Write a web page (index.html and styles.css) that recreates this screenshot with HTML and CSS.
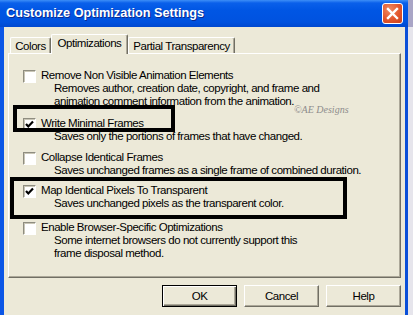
FILE: index.html
```html
<!DOCTYPE html>
<html>
<head>
<meta charset="utf-8">
<link rel="stylesheet" href="styles.css">
</head>
<body>
<div class="window">
  <div class="titlebar">
    <span class="title">Customize Optimization Settings</span>
    <div class="close"><svg width="21" height="21" viewBox="0 0 21 21"><path d="M6 6 L15 15 M15 6 L6 15" stroke="#fff" stroke-width="2.4" stroke-linecap="square"/></svg></div>
  </div>
  <div class="client">
    <div class="tabs">
      <div class="tab t-colors">Colors</div>
      <div class="tab t-opt active">Optimizations</div>
      <div class="tab t-partial">Partial Transparency</div>
    </div>
    <div class="panel">
      <div class="option">
        <span class="check"></span>
        <div class="texts">
          <div class="label">Remove Non Visible Animation Elements</div>
          <div class="desc">Removes author, creation date, copyright, and frame and<br>animation comment information from the animation.</div>
        </div>
      </div>
      <div class="option o2">
        <span class="check checked"><svg width="11" height="11" viewBox="0 0 11 11"><path d="M2 5 L4.3 7.5 L9 2.5" fill="none" stroke="#000" stroke-width="2.2"/></svg></span>
        <div class="texts">
          <div class="label">Write Minimal Frames</div>
          <div class="desc">Saves only the portions of frames that have changed.</div>
        </div>
      </div>
      <div class="option o3">
        <span class="check"></span>
        <div class="texts">
          <div class="label">Collapse Identical Frames</div>
          <div class="desc">Saves unchanged frames as a single frame of combined duration.</div>
        </div>
      </div>
      <div class="option o4">
        <span class="check checked"><svg width="11" height="11" viewBox="0 0 11 11"><path d="M2 5 L4.3 7.5 L9 2.5" fill="none" stroke="#000" stroke-width="2.2"/></svg></span>
        <div class="texts">
          <div class="label">Map Identical Pixels To Transparent</div>
          <div class="desc">Saves unchanged pixels as the transparent color.</div>
        </div>
      </div>
      <div class="option o5">
        <span class="check"></span>
        <div class="texts">
          <div class="label">Enable Browser-Specific Optimizations</div>
          <div class="desc">Some internet browsers do not currently support this<br>frame disposal method.</div>
        </div>
      </div>
      <div class="watermark">©AE Designs</div>
      <div class="mark mark-1"></div>
      <div class="mark mark-2"></div>
    </div>
    <div class="buttons">
      <div class="btn default">OK</div>
      <div class="btn">Cancel</div>
      <div class="btn">Help</div>
    </div>
  </div>
</div>
</body>
</html>
```
FILE: styles.css
```css
body {
  margin: 0;
  width: 413px;
  height: 315px;
  overflow: hidden;
  background: linear-gradient(#a9a5c6 0, #a9a5c6 27px, #e6e5ec 27px);
  font-family: "Liberation Sans", Arial, sans-serif;
  font-size: 11.5px;
  letter-spacing: -0.45px;
  color: #000;
}

.window {
  width: 408px;
  height: 315px;
  display: flex;
  flex-direction: column;
}

.titlebar {
  height: 27px;
  flex: none;
  display: flex;
  align-items: flex-start;
  background: linear-gradient(#3d8ef7 0, #0a60ea 3px, #0056e4 10px, #0052df 22px, #0048cf 27px);
}

.title {
  font-family: "Liberation Sans", sans-serif;
  font-weight: bold;
  font-size: 12.7px;
  letter-spacing: 0;
  color: #fff;
  text-shadow: 1px 1px #0b2a8e;
  padding-left: 6px;
  line-height: 27px;
}

.close {
  margin-left: auto;
  margin-top: 3px;
  margin-right: 5px;
  width: 21px;
  height: 21px;
  box-sizing: border-box;
  border: 1px solid #fff;
  border-radius: 3px;
  background: radial-gradient(circle at 35% 30%, #ef8a62, #e2562c 55%, #c8401c);
  display: flex;
}

.close svg {
  margin: -1px;
}

.client {
  flex: 1;
  background: #ece9d8;
  border-left: 4px solid #0b56e6;
  border-right: 3px solid #0a4fd8;
  padding: 7px 4px 0 4px;
  display: flex;
  flex-direction: column;
}

.tabs {
  display: flex;
  align-items: flex-end;
  height: 19px;
  padding-left: 2px;
}

.tab {
  height: 16px;
  box-sizing: border-box;
  border-left: 1px solid #fff;
  border-top: 1px solid #fff;
  border-right: 1px solid #716f64;
  border-top-left-radius: 2px;
  border-top-right-radius: 2px;
  box-shadow: inset -1px 0 #aca899;
  display: flex;
  align-items: center;
  justify-content: center;
  background: #ece9d8;
}

.t-colors { width: 41px; }
.t-opt { width: 77px; }
.t-partial { width: 107px; }

.tab.active {
  height: 20px;
  margin-bottom: -1px;
  position: relative;
  z-index: 1;
  padding-bottom: 3px;
}

.panel {
  position: relative;
  height: 225px;
  box-sizing: border-box;
  border: 1px solid;
  border-color: #fff #716f64 #716f64 #fff;
  box-shadow: inset -1px -1px #aca899;
  padding: 15px 0 0 14px;
}

.option {
  display: grid;
  grid-template-columns: 13px 1fr;
  column-gap: 5px;
  line-height: 13px;
}

.o2 { margin-top: 9px; }
.o3 { margin-top: 8px; }
.o4 { margin-top: 7px; }
.o5 { margin-top: 11px; }

.check {
  width: 13px;
  height: 13px;
  box-sizing: border-box;
  border: 1px solid;
  border-color: #8f8d80 #fff #fff #8f8d80;
  box-shadow: inset 1px 1px #c9c6b6;
  background: #fff;
  display: flex;
  align-items: center;
  justify-content: center;
  margin-top: 1px;
}

.desc {
  padding-left: 13px;
}

.watermark {
  position: absolute;
  left: 285px;
  top: 50px;
  font-family: "Liberation Serif", serif;
  font-style: italic;
  font-size: 10px;
  letter-spacing: 0;
  color: #8c8c8c;
}

.mark {
  position: absolute;
  box-sizing: border-box;
  border: 4px solid #000;
}

.mark-1 {
  left: 4px;
  top: 51px;
  width: 162px;
  height: 27px;
}

.mark-2 {
  left: 1px;
  top: 123px;
  width: 337px;
  height: 42px;
}

.buttons {
  display: flex;
  justify-content: flex-end;
  gap: 7px;
  margin-top: 7px;
}

.btn {
  width: 75px;
  height: 22px;
  box-sizing: border-box;
  border: 1px solid;
  border-color: #fff #716f64 #716f64 #fff;
  box-shadow: inset -1px -1px #aca899;
  display: flex;
  align-items: center;
  justify-content: center;
}

.btn.default {
  border: 1px solid #000;
  box-shadow: inset 1px 1px #fff, inset -1px -1px #716f64, inset -2px -2px #aca899;
}
```
